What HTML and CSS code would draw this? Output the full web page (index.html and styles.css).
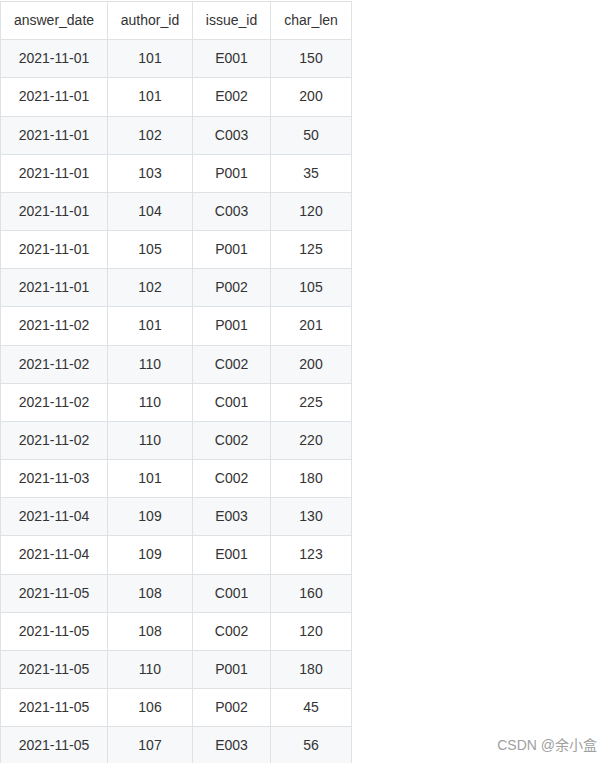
FILE: index.html
```html
<!DOCTYPE html>
<html>
<head>
<meta charset="utf-8">
<link rel="stylesheet" href="styles.css">
</head>
<body>
<table class="data">
<colgroup><col class="c1"><col class="c2"><col class="c3"><col class="c4"></colgroup>
<thead>
<tr><th>answer_date</th><th>author_id</th><th>issue_id</th><th>char_len</th></tr>
</thead>
<tbody>
<tr><td>2021-11-01</td><td>101</td><td>E001</td><td>150</td></tr>
<tr><td>2021-11-01</td><td>101</td><td>E002</td><td>200</td></tr>
<tr><td>2021-11-01</td><td>102</td><td>C003</td><td>50</td></tr>
<tr><td>2021-11-01</td><td>103</td><td>P001</td><td>35</td></tr>
<tr><td>2021-11-01</td><td>104</td><td>C003</td><td>120</td></tr>
<tr><td>2021-11-01</td><td>105</td><td>P001</td><td>125</td></tr>
<tr><td>2021-11-01</td><td>102</td><td>P002</td><td>105</td></tr>
<tr><td>2021-11-02</td><td>101</td><td>P001</td><td>201</td></tr>
<tr><td>2021-11-02</td><td>110</td><td>C002</td><td>200</td></tr>
<tr><td>2021-11-02</td><td>110</td><td>C001</td><td>225</td></tr>
<tr><td>2021-11-02</td><td>110</td><td>C002</td><td>220</td></tr>
<tr><td>2021-11-03</td><td>101</td><td>C002</td><td>180</td></tr>
<tr><td>2021-11-04</td><td>109</td><td>E003</td><td>130</td></tr>
<tr><td>2021-11-04</td><td>109</td><td>E001</td><td>123</td></tr>
<tr><td>2021-11-05</td><td>108</td><td>C001</td><td>160</td></tr>
<tr><td>2021-11-05</td><td>108</td><td>C002</td><td>120</td></tr>
<tr><td>2021-11-05</td><td>110</td><td>P001</td><td>180</td></tr>
<tr><td>2021-11-05</td><td>106</td><td>P002</td><td>45</td></tr>
<tr><td>2021-11-05</td><td>107</td><td>E003</td><td>56</td></tr>
</tbody>
</table>
<div class="watermark">CSDN @余小盒</div>
</body>
</html>
```
FILE: styles.css
```css
html, body {
  margin: 0;
  padding: 0;
  background: #fff;
  overflow: hidden;
}
body {
  padding-top: 1px;
  font-family: "Liberation Sans", Arial, "Noto Sans CJK SC", sans-serif;
  font-size: 14px;
  color: #333;
}
.data {
  border-collapse: collapse;
  table-layout: fixed;
  width: 351px;
}
.c1 { width: 107px; }
.c2 { width: 85px; }
.c3 { width: 78px; }
.c4 { width: 81px; }
.data th, .data td {
  border: 1px solid #dfe2e5;
  padding: 8px 0;
  line-height: 21.17px;
  text-align: center;
  font-weight: normal;
  white-space: nowrap;
}
.data thead tr { background: #fff; }
.data tbody tr:nth-child(odd) { background: #f6f8fa; }
.data tbody tr:nth-child(even) { background: #fff; }
.watermark {
  position: absolute;
  right: 16px;
  bottom: 9px;
  font-family: "Liberation Sans", Arial, "Noto Sans CJK SC", sans-serif;
  font-size: 14px;
  color: #a0a0a0;
}
```
